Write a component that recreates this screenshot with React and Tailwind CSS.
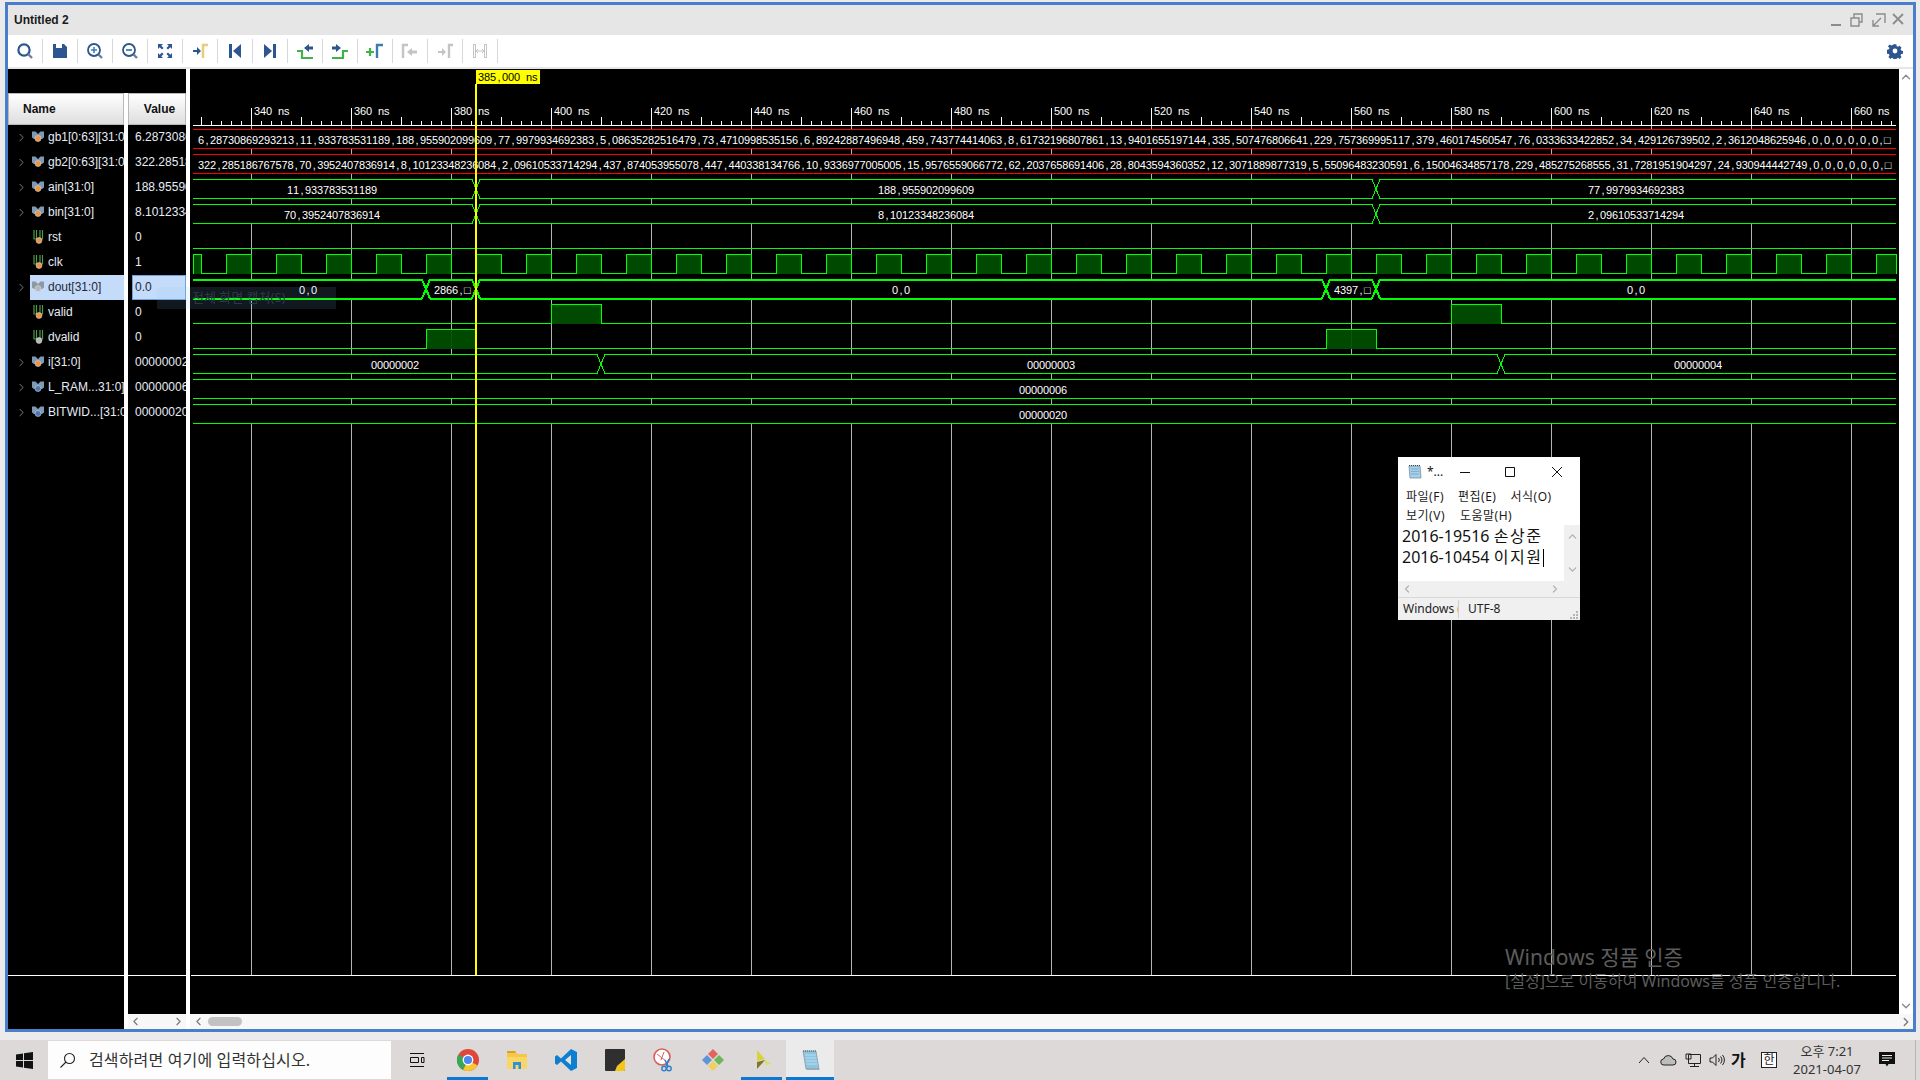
// Vivado waveform window with a notepad on top, Windows 10 taskbar below.
import { ChevronDown, ChevronLeft, ChevronRight, ChevronUp } from 'lucide-react'

const SANS = 'font-["Liberation_Sans",Arial,sans-serif]'
const KR = 'font-["Noto_Sans","Noto_Sans_CJK_KR",sans-serif]'
const GREEN = '#00ff00'
const NAVY = '#2d5690'

const GB1 = '6,28730869293213,11,933783531189,188,955902099609,77,9979934692383,5,08635282516479,73,4710998535156,6,89242887496948,459,743774414063,8,61732196807861,13,9401655197144,335,507476806641,229,757369995117,379,460174560547,76,0333633422852,34,429126739502,2,3612048625946,0,0,0,0,0,0,□'
const GB2 = '322,285186767578,70,3952407836914,8,10123348236084,2,09610533714294,437,874053955078,447,440338134766,10,9336977005005,15,9576559066772,62,2037658691406,28,8043594360352,12,3071889877319,5,55096483230591,6,15004634857178,229,485275268555,31,7281951904297,24,930944442749,0,0,0,0,0,0,□'

const SIGNALS = [
  { name: 'gb1[0:63][31:0]', value: '6.287308693', icon: 'bus' },
  { name: 'gb2[0:63][31:0]', value: '322.2851867', icon: 'bus' },
  { name: 'ain[31:0]', value: '188.9559020', icon: 'bus' },
  { name: 'bin[31:0]', value: '8.101233482', icon: 'bus' },
  { name: 'rst', value: '0', icon: 'bit' },
  { name: 'clk', value: '1', icon: 'bit' },
  { name: 'dout[31:0]', value: '0.0', icon: 'busGrey', selected: true },
  { name: 'valid', value: '0', icon: 'bit' },
  { name: 'dvalid', value: '0', icon: 'bitGrey' },
  { name: 'i[31:0]', value: '00000002', icon: 'bus' },
  { name: 'L_RAM...31:0]', value: '00000006', icon: 'busConst' },
  { name: 'BITWID...[31:0]', value: '00000020', icon: 'busConst' },
]

const rowTop = (k) => 129 + 25 * k
const rowBottom = (k) => 148 + 25 * k

// the wave font is drawn on a fixed cell, commas sit in the middle of theirs
function CellText({ x, y, children, fill = '#fff', cell = 6 }) {
  const xs = Array.from(children)
    .map((c, i) => x + i * cell + (c === ',' ? 1.5 : 0))
    .join(' ')
  return (
    <text x={xs} y={y} fill={fill} fontSize="11" fontFamily="Liberation Sans, Arial, sans-serif">
      {children}
    </text>
  )
}

function CenterText({ cx, y, children }) {
  return <CellText x={cx - (children.length * 6) / 2} y={y}>{children}</CellText>
}

function Bus({ k, cuts = [], color = GREEN, width = 1, labels = [] }) {
  const top = rowTop(k) + 0.5
  const bot = rowBottom(k) + 0.5
  const edges = [193, ...cuts, 1896]
  const parts = []
  for (let i = 0; i < edges.length - 1; i++) {
    const a = i === 0 ? edges[i] : edges[i] + 4
    const b = i === edges.length - 2 ? edges[i + 1] : edges[i + 1] - 4
    parts.push(`M${a} ${top}H${b}M${a} ${bot}H${b}`)
  }
  cuts.forEach((c) => parts.push(`M${c - 4} ${top}L${c + 4} ${bot}M${c - 4} ${bot}L${c + 4} ${top}`))
  return (
    <g>
      <rect x="191" y={rowTop(k)} width="1705" height={rowBottom(k) - rowTop(k) + 1} fill="#000" />
      <path d={parts.join('')} stroke={color} strokeWidth={width} fill="none" />
      {labels.map(([cx, t]) => (
        <CenterText key={t + cx} cx={cx} y={rowTop(k) + 15}>{t}</CenterText>
      ))}
    </g>
  )
}

function Bit({ k, highs = [] }) {
  const top = rowTop(k) + 0.5
  const bot = rowBottom(k) + 0.5
  let d = `M193 ${bot}`
  highs.forEach(([a, b]) => {
    d += `H${a}V${top}H${b}V${bot}`
  })
  d += 'H1896'
  return (
    <g>
      {highs.map(([a, b]) => (
        <rect key={a} x={a} y={top} width={b - a} height={bot - top} fill="#004f00" fillOpacity="0.93" />
      ))}
      <path d={d} stroke={GREEN} fill="none" />
    </g>
  )
}

function Waveform() {
  const majors = Array.from({ length: 17 }, (_, i) => 251 + i * 100)
  const clk = [[193, 201]]
  for (let x = 226; x < 1896; x += 50) clk.push([x, Math.min(x + 25, 1896)])
  const ticks = []
  for (let x = 201; x < 1896; x += 10) {
    const major = (x - 251) % 100 === 0
    const mid = (x - 251) % 50 === 0
    ticks.push(`M${x + 0.5} ${major ? 108 : mid ? 117 : 121}V125`)
  }
  return (
    <svg width="1709" height="945" viewBox="190 69 1709 945" shapeRendering="crispEdges" className="block shrink-0 bg-black">
      {majors.map((x) => (
        <rect key={x} x={x} y="125" width="1" height="850" fill="#b4b4b4" />
      ))}
      {/* ruler */}
      <path d={ticks.join('')} stroke="#fff" fill="none" />
      <rect x="193" y="125" width="1703" height="1" fill="#fff" />
      {majors.map((x, i) => (
        <CellText key={x} x={x + 3} y={115}>{`${340 + i * 20} ns`}</CellText>
      ))}

      {/* gb1 / gb2 are shown as long concatenated buses */}
      <Bus k={0} color="#ff0000" />
      <CellText x={198} y={144}>{GB1}</CellText>
      <Bus k={1} color="#ff0000" />
      <CellText x={198} y={169} cell={5.96}>{GB2}</CellText>

      <Bus k={2} cuts={[476, 1376]} labels={[[332, '11,933783531189'], [926, '188,955902099609'], [1636, '77,9979934692383']]} />
      <Bus k={3} cuts={[476, 1376]} labels={[[332, '70,3952407836914'], [926, '8,10123348236084'], [1636, '2,09610533714294']]} />
      <Bit k={4} />
      <Bit k={5} highs={clk} />
      <Bus k={6} cuts={[426, 476, 1326, 1376]} width={2} labels={[[308, '0,0'], [452, '2866,□'], [901, '0,0'], [1352, '4397,□'], [1636, '0,0']]} />
      <Bit k={7} highs={[[551, 601], [1451, 1501]]} />
      <Bit k={8} highs={[[426, 476], [1326, 1376]]} />
      <Bus k={9} cuts={[601, 1501]} labels={[[395, '00000002'], [1051, '00000003'], [1698, '00000004']]} />
      <Bus k={10} labels={[[1043, '00000006']]} />
      <Bus k={11} labels={[[1043, '00000020']]} />

      <rect x="191" y="975" width="1705" height="1" fill="#fff" />
      {/* cursor */}
      <rect x="475" y="84" width="2" height="891" fill="#ffff00" />
      <rect x="476" y="70" width="64" height="14" fill="#ffff00" />
      <CellText x={478} y={81} fill="#000">385,000 ns</CellText>
    </svg>
  )
}

function SignalIcon({ type }) {
  const dot = type === 'bus' || type === 'bit' ? '#ee9440' : type === 'busConst' ? '#4d78b0' : '#b8b8b8'
  if (type === 'bit' || type === 'bitGrey') {
    return (
      <svg width="14" height="14" viewBox="0 0 14 14" className="shrink-0">
        <path d="M3 0v9h2.500V0M9 0v9h2.500V0" fill="none" stroke="#4f9a48" strokeWidth="1.200" />
        <circle cx="8" cy="10.500" r="2.900" fill={dot} stroke="#d8d8d8" strokeWidth="0.600" />
      </svg>
    )
  }
  return (
    <svg width="14" height="14" viewBox="0 0 14 14" className="shrink-0">
      <path d="M1 1.500h3.500L7 4l2.500-2.500H13v6l-2 1.500H3L1 7.500z" fill={type === 'busGrey' ? '#8c98a4' : '#7f98b4'} />
      <circle cx="7" cy="8.500" r="3" fill={dot} stroke="#cfd6dd" strokeWidth="0.600" />
    </svg>
  )
}

function NameRow({ s }) {
  const hasChildren = s.icon.startsWith('bus')
  return (
    <div className="flex h-[25px] items-center">
      <div className="flex w-[22px] shrink-0 items-center pl-[7px]">
        {hasChildren && <ChevronRight size={13} strokeWidth={1.6} className="text-[#8f8f8f]" />}
      </div>
      <div className={`flex h-[25px] min-w-0 flex-1 items-center overflow-hidden pb-[2px] ${s.selected ? 'bg-[#c5dbfa] text-[#1f2a38]' : 'text-[#e6ecf4]'}`}>
        <div className="flex w-[17px] shrink-0 justify-start pl-px"><SignalIcon type={s.icon} /></div>
        <span className="whitespace-nowrap pl-px text-[12px]">{s.name}</span>
      </div>
    </div>
  )
}

function ValueRow({ s }) {
  return (
    <div className="flex h-[25px] items-center pl-[4px]">
      <div className={`flex h-[25px] min-w-0 flex-1 items-center overflow-hidden pb-[2px] text-[12px] whitespace-nowrap ${s.selected ? 'border border-[#6ea2dc] bg-[#c5dbfa] pl-[2px] text-[#1f2a38]' : 'pl-[3px] text-[#e6ecf4]'}`}>
        {s.value}
      </div>
    </div>
  )
}

function HeaderCell({ children, className = '' }) {
  return (
    <div className={`flex h-[32px] items-center border border-[#b9b9b9] bg-gradient-to-b from-white to-[#dedede] text-[12px] font-bold text-[#111] ${className}`}>
      {children}
    </div>
  )
}

const TOOLS = [
  <g fill="none"><circle cx="9" cy="9" r="5.6" stroke={NAVY} strokeWidth="2.2" /><path d="M13 13l4 4" stroke="#6d7f95" strokeWidth="2.4" /></g>,
  <path d="M3 3h3v4h6V3h2l3 3v11H3z" fill={NAVY} />,
  <g fill="none"><circle cx="9" cy="9" r="6" stroke={NAVY} strokeWidth="1.8" /><path d="M6 9h6M9 6v6" stroke="#3f7fb5" strokeWidth="1.6" /><path d="M13.5 13.5l3.5 3.5" stroke="#6d7f95" strokeWidth="2.4" /></g>,
  <g fill="none"><circle cx="9" cy="9" r="6" stroke={NAVY} strokeWidth="1.8" /><path d="M6 9h6" stroke="#3f7fb5" strokeWidth="1.8" /><path d="M13.5 13.5l3.5 3.5" stroke="#6d7f95" strokeWidth="2.4" /></g>,
  <path d="M3 3h5L6.3 4.7 8.6 7 7 8.6 4.7 6.3 3 8zM17 3v5l-1.7-1.7L13 8.6 11.4 7l2.3-2.3L12 3zM3 17v-5l1.7 1.7L7 11.4 8.6 13l-2.3 2.3L8 17zM17 17h-5l1.7-1.7L11.4 13l1.6-1.6 2.3 2.3L17 12z" fill={NAVY} />,
  <g><path d="M3 9h4V6l4 4-4 4v-3H3z" fill={NAVY} /><path d="M13 17V4h5" fill="none" stroke="#e6cd80" strokeWidth="2.6" /></g>,
  <g fill={NAVY}><rect x="4" y="3" width="3" height="14" /><path d="M16 3v14l-8-7z" /></g>,
  <g fill={NAVY}><rect x="13" y="3" width="3" height="14" /><path d="M4 3v14l8-7z" /></g>,
  <g><path d="M2 9h5v7h11" fill="none" stroke="#3fb34a" strokeWidth="2.2" transform="translate(0 1)" /><path d="M9 7l5-4v2.5h4v3h-4V11z" fill={NAVY} /></g>,
  <g><path d="M18 10h-5v7H2" fill="none" stroke="#3fb34a" strokeWidth="2.2" /><path d="M11 7L6 3v2.5H2v3h4V11z" fill={NAVY} /></g>,
  <g fill="none"><path d="M1 11h8M5 7v8" stroke="#3fb34a" strokeWidth="2.2" /><path d="M12 17V4h6" stroke="#3a7cae" strokeWidth="2.4" /></g>,
  <g><path d="M3 17V4h5" fill="none" stroke="#c4c4c4" strokeWidth="2.4" /><path d="M7 11l5-4v2.5h5v3h-5V15z" fill="#c4c4c4" /></g>,
  <g><path d="M3 10h4V7l4 4-4 4v-3H3z" fill="#c4c4c4" /><path d="M14 17V4h4" fill="none" stroke="#c4c4c4" strokeWidth="2.4" /></g>,
  <g fill="none" stroke="#c4c4c4"><rect x="3.5" y="3.5" width="2" height="13" strokeWidth="1" /><rect x="14.5" y="3.5" width="2" height="13" strokeWidth="1" /><path d="M6 10h8M8 8l-2 2 2 2M12 8l2 2-2 2" strokeWidth="1" /></g>,
]

function Toolbar() {
  return (
    <div className="flex h-[32px] items-center bg-white">
      <div className="flex flex-1 items-center">
        {TOOLS.map((t, i) => (
          <div key={i} className="flex h-[24px] w-[35px] items-center justify-between">
            <svg width="20" height="20" viewBox="0 0 20 20" className="ml-[7px]">{t}</svg>
            <div className="h-[24px] w-px bg-[#d8d8d8]" />
          </div>
        ))}
      </div>
      <svg width="16" height="16" viewBox="0 0 16 16" className="mr-[10px]">
        <path d="M6.6 1h2.8l.4 2 1.4.6 1.7-1.1 2 2-1.1 1.7.6 1.4 2 .4v2.800l-2 .4-.6 1.4 1.1 1.7-2 2-1.7-1.1-1.4.6-.4 2H6.600l-.4-2-1.4-.6-1.7 1.1-2-2 1.1-1.7-.6-1.4-2-.4V6.600l2-.4.6-1.4L.5 3.100l2-2 1.7 1.1 1.4-.6z" fill={NAVY} transform="translate(.4 .4) scale(.95)" />
        <circle cx="8" cy="8" r="2.4" fill="#fff" />
      </svg>
    </div>
  )
}

function WindowControls() {
  return (
    <svg width="82" height="16" viewBox="0 0 82 16" fill="none" stroke="#8c8c8c" strokeWidth="1.4">
      <path d="M0 13h10" strokeWidth="2" />
      <path d="M20 6h8v8h-8zM23 6V2h8v8h-3" />
      <path d="M45 2h9v9M42 14l8-8M42 8v6h6" />
      <path d="M62 2l10 10M72 2L62 12" strokeWidth="1.8" />
    </svg>
  )
}

function Notepad() {
  return (
    <div className={`absolute left-[1398px] top-[457px] flex h-[163px] w-[182px] flex-col bg-white ${KR}`}>
      <div className="flex h-[29px] items-center text-[#111]">
        <svg width="16" height="16" viewBox="0 0 16 16" className="ml-[9px]">
          <path d="M2 2h11l1 12H3z" fill="#a8cfe8" stroke="#6f8fa8" strokeWidth="0.8" />
          <path d="M4 5h8M4 7.5h8M4 10h8" stroke="#6f9fc0" strokeWidth="0.7" />
          <path d="M2 1.5h11" stroke="#444" strokeDasharray="1 1" />
        </svg>
        <span className="ml-[4px] text-[12px]">*...</span>
        <svg width="108" height="14" viewBox="0 0 108 14" fill="none" stroke="#111" className="ml-auto mr-[12px]">
          <path d="M0 7.5h10M45.5 2.5h9v9h-9zM92 2l10 10M102 2L92 12" />
        </svg>
      </div>
      <div className="mt-[2px] flex h-[18px] items-center gap-[14px] pl-[8px] text-[12px] tracking-[0.5px] text-[#1a1a1a]">
        <span>파일(F)</span><span>편집(E)</span><span>서식(O)</span>
      </div>
      <div className="flex h-[19px] items-center gap-[15px] pl-[8px] text-[12px] tracking-[0.5px] text-[#1a1a1a]">
        <span>보기(V)</span><span>도움말(H)</span>
      </div>
      <div className="flex h-[56px]">
        <div className="min-w-0 flex-1 pl-[4px] pt-[1px] text-[16px] leading-[21px] text-[#111] whitespace-nowrap">
          <div>2016-19516 <span className="tracking-[1.6px]">손상준</span></div>
          <div className="flex items-center whitespace-pre">2016-10454 <span className="tracking-[1.6px]">이지원</span><span className="h-[18px] w-px bg-black" /></div>
        </div>
        <div className="flex w-[16px] flex-col items-center justify-between bg-[#f0f0f0] py-[5px] text-[#b0b0b0]">
          <ChevronUp size={13} strokeWidth={2.4} />
          <ChevronDown size={13} strokeWidth={2.4} />
        </div>
      </div>
      <div className="flex h-[16px] items-center justify-between bg-[#f0f0f0] px-[3px] text-[#b0b0b0]">
        <ChevronLeft size={12} strokeWidth={2.4} />
        <ChevronRight size={12} strokeWidth={2.4} className="mr-[16px]" />
      </div>
      <div className="flex flex-1 items-center border-t border-[#d8d8d8] bg-[#f0f0f0] text-[12px] text-[#222]">
        <span className="w-[61px] overflow-hidden whitespace-nowrap border-r border-[#d0d0d0] pl-[5px]">Windows (</span>
        <span className="pl-[9px]">UTF-8</span>
        <svg width="10" height="10" viewBox="0 0 10 10" className="ml-auto mr-[1px] self-end fill-[#b5b5b5]">
          <path d="M7 1h2v2H7zM4 4h2v2H4zM7 4h2v2H7zM1 7h2v2H1zM4 7h2v2H4zM7 7h2v2H7z" />
        </svg>
      </div>
    </div>
  )
}

const TASK_ICONS = [
  { key: 'chrome', on: true, svg: (
    <g>
      <circle cx="12" cy="12" r="11" fill="#e0463a" />
      <path d="M12 12L21.6 17.5A11 11 0 0 1 7 21.8z" fill="#f7c92f" />
      <path d="M12 12L7 21.8A11 11 0 0 1 2.4 6.5z" fill="#3aa757" />
      <circle cx="12" cy="12" r="5.4" fill="#fff" /><circle cx="12" cy="12" r="4.1" fill="#4a8af0" />
    </g>
  ) },
  { key: 'folder', svg: (
    <g>
      <path d="M2 3h8l2 3h10v15H2z" fill="#f5c748" /><path d="M2 3h8l1 2H2z" fill="#d9a227" />
      <rect x="2" y="9" width="20" height="12" fill="#fad667" />
      <path d="M8 21v-7h8v7h-2.5v-4h-3v4z" fill="#2f8fd8" />
    </g>
  ) },
  { key: 'vscode', svg: (
    <g>
      <path d="M17 1l6 3v16l-6 3-10-9.5L3 17l-2-1.5V8.500L3 7l4 3.500z" fill="#0e7fd0" />
      <path d="M17 7l-6 5 6 5z" fill="#e4e0de" />
    </g>
  ) },
  { key: 'sticky', svg: (
    <g><rect x="2" y="1" width="20" height="22" rx="1" fill="#2f2f2f" /><path d="M22 11v11a1 1 0 0 1-1 1h-9l2-5z" fill="#f5c518" /></g>
  ) },
  { key: 'snip', svg: (
    <g fill="none">
      <circle cx="10" cy="9" r="8" fill="#fff" stroke="#d8605a" strokeWidth="1.6" />
      <path d="M5 6l9 7M12 4l-3 8" stroke="#d8605a" />
      <path d="M13 12l3 6M17 11l-3 7" stroke="#2f7fc8" strokeWidth="1.6" />
      <circle cx="17" cy="20.500" r="2.2" stroke="#2f7fc8" strokeWidth="1.4" /><circle cx="12" cy="20.500" r="2.2" stroke="#2f7fc8" strokeWidth="1.4" />
    </g>
  ) },
  { key: 'kit', svg: (
    <g>
      <path d="M12 1l5 5-5 5-5-5z" fill="#e2655d" /><path d="M18 7l5 5-5 5-5-5z" fill="#6db65a" />
      <path d="M6 7l5 5-5 5-5-5z" fill="#5f93d8" /><path d="M12 13l5 5-5 5-5-5z" fill="#f0cf5a" />
    </g>
  ) },
  { key: 'vivado', on: true, svg: (
    <g>
      <path d="M7 2l8 9-8 2z" fill="#d8d23e" /><path d="M7 14l8-2-8 9z" fill="#7d7a22" />
      <path d="M15 12l7 4-7 1z" fill="#d9e06a" />
    </g>
  ) },
  { key: 'notepad', active: true, svg: (
    <g>
      <path d="M5 3h13l3 18H8z" fill="#8fc4e0" stroke="#6c8fa8" strokeWidth="0.6" />
      <path d="M7 7h11M7.500 10h11M8 13h11M8.500 16h11" stroke="#b8deef" />
      <path d="M8 21h13l1 1H9z" fill="#a8a8a8" />
      <path d="M5 3h13" stroke="#555" strokeDasharray="1 1" />
    </g>
  ) },
]

function taskCell(t) {
  if (t.active) return 'w-[48px] border-[#0a78d4] bg-[#ecebeb]'
  if (t.on) return 'mx-[4px] w-[41px] border-[#0a78d4]'
  return 'w-[49px] border-transparent'
}

function Taskbar() {
  return (
    <div className={`flex h-[40px] items-stretch bg-[#dcd9d8] ${KR}`}>
      <div className="flex w-[48px] items-center justify-center">
        <svg width="17" height="17" viewBox="0 0 17 17" fill="#111">
          <path d="M0 2.400L7 1.400V8H0zM8 1.300L17 0v8H8zM0 9h7v6.600L0 14.600zM8 9h9v8l-9-1.300z" />
        </svg>
      </div>
      <div className="my-[1px] flex w-[343px] items-center bg-[#fdfdfd] pl-[12px] text-[16px] text-[#333]">
        <svg width="16" height="16" viewBox="0 0 16 16" fill="none" stroke="#222" strokeWidth="1.100" className="-scale-x-100">
          <circle cx="6.500" cy="6.500" r="5" /><path d="M10 10l5.500 5.500" />
        </svg>
        <span className="ml-[13px] whitespace-nowrap tracking-[0.15px]">검색하려면 여기에 입력하십시오.</span>
      </div>
      <div className="flex w-[52px] items-center justify-center">
        <svg width="16" height="16" viewBox="0 0 16 16" fill="none" stroke="#111">
          <path d="M1 1.500h14M1 14.500h14M1.500 5.500h8v5h-8zM12.500 5.500h2.500v5h-2.500z" />
        </svg>
      </div>
      {TASK_ICONS.map((t) => (
        <div key={t.key} className={`flex items-center justify-center border-b-[3px] pt-[3px] ${taskCell(t)}`}>
          <svg width="24" height="24" viewBox="0 0 24 24">{t.svg}</svg>
        </div>
      ))}
      <div className="ml-auto flex items-center text-[#222]">
        <svg width="12" height="8" viewBox="0 0 12 8" fill="none" stroke="#222" className="mr-[10px]"><path d="M1 7l5-5.500L11 7" /></svg>
        <svg width="17" height="12" viewBox="0 0 17 12" fill="#bdbdbd" stroke="#222" className="mr-[8px]">
          <path d="M4 11a3 3 0 0 1-.5-6A5 5 0 0 1 13 5a3 3 0 0 1 0 6z" />
        </svg>
        <svg width="16" height="15" viewBox="0 0 16 15" fill="none" stroke="#222" className="mr-[8px]">
          <path d="M3.500 1.500h12v9h-12zM1 1h5v5H1zM9.500 10.500v3M5 13.500h9" />
        </svg>
        <svg width="16" height="14" viewBox="0 0 16 14" fill="none" stroke="#222" className="mr-[6px]">
          <path d="M1 5h2.500L7 1.500v11L3.500 9H1zM9.500 5a3 3 0 0 1 0 4M11.500 3.500a5 5 0 0 1 0 7M13.500 2a7.500 7.500 0 0 1 0 10" />
        </svg>
        <span className="w-[20px] text-[16px] font-bold leading-none text-[#111]">가</span>
        <span className="ml-[10px] flex h-[16px] w-[16px] items-center justify-center border border-[#222] bg-white text-[12px] leading-none">한</span>
        <div className="ml-[3px] flex w-[94px] flex-col items-center text-[13px] leading-[18px] text-[#333]">
          <span>오후 7:21</span>
          <span>2021-04-07</span>
        </div>
        <svg width="16" height="16" viewBox="0 0 16 16" className="ml-[5px] mr-[20px]">
          <path d="M0 0h16v12H9.500L8 14.500 6.500 12H0z" fill="#111" />
          <path d="M3 3.500h10M3 6h10M3 8.500h7" stroke="#eee" />
        </svg>
        <div className="h-full w-px bg-[#b5b5b5]" />
        <div className="w-[4px]" />
      </div>
    </div>
  )
}

export default function App() {
  return (
    <div className={`relative flex h-[1080px] w-[1920px] flex-col overflow-hidden bg-[#ebebeb] ${SANS}`}>
      <div className="h-[1040px] pb-[8px] pl-[5px] pr-[4px] pt-[2px]">
        <div className="flex h-full flex-col border-[3px] border-[#4a7ecb] bg-white">
          <div className="flex h-[30px] items-center justify-between bg-[#e6e6e6] pl-[6px]">
            <span className="text-[12px] font-bold text-[#1a1a1a]">Untitled 2</span>
            <WindowControls />
          </div>
          <Toolbar />
          <div className="h-[2px] bg-[#e6e6e6]" />
          <div className="flex min-h-0 flex-1">
            {/* names and values */}
            <div className="flex w-[178px] flex-col">
              <div className="h-[24px] bg-black" />
              <div className="flex min-h-0 flex-1 gap-[4px]">
                <div className="flex w-[116px] flex-col bg-black">
                  <HeaderCell className="pl-[14px]">Name</HeaderCell>
                  <div className="h-[850px] overflow-hidden">
                    {SIGNALS.map((s) => <NameRow key={s.name} s={s} />)}
                  </div>
                  <div className="h-px bg-white" />
                </div>
                <div className="flex w-[58px] flex-col">
                  <HeaderCell className="justify-center pl-[5px]">Value</HeaderCell>
                  <div className="h-[850px] overflow-hidden bg-black">
                    {SIGNALS.map((s) => <ValueRow key={s.name} s={s} />)}
                  </div>
                  <div className="h-px bg-white" />
                  <div className="h-[38px] bg-black" />
                  <div className="flex h-[15px] items-center justify-between bg-[#f7f7f7] px-[1px] text-[#777]">
                    <ChevronLeft size={13} strokeWidth={2} />
                    <ChevronRight size={13} strokeWidth={2} />
                  </div>
                </div>
              </div>
            </div>
            <div className="w-[4px]" />
            {/* wave pane with its scrollbars */}
            <div className="flex min-w-0 flex-1 flex-col">
              <div className="flex">
                <Waveform />
                <div className="flex w-[14px] flex-col items-center justify-between py-[1px] text-[#888]">
                  <ChevronUp size={14} strokeWidth={2.2} />
                  <ChevronDown size={14} strokeWidth={2.2} />
                </div>
              </div>
              <div className="flex h-[15px] items-center bg-[#f7f7f7] pl-[2px] text-[#777]">
                <ChevronLeft size={13} strokeWidth={2} />
                <div className="ml-[3px] h-[9px] w-[34px] rounded-full bg-[#c2c2c2]" />
                <ChevronRight size={14} strokeWidth={2.2} className="ml-auto" />
              </div>
            </div>
          </div>
        </div>
      </div>
      <Taskbar />

      {/* leftover fade of the capture tooltip */}
      <div className={`absolute left-[157px] top-[287px] flex h-[22px] w-[179px] items-center bg-[#8cc8ff]/12 pl-[35px] text-[13px] text-[#2d3a45] ${KR}`}>
        전체 화면 캡처(S)
      </div>
      <div className={`absolute left-[1505px] top-[943px] text-[#5c5c5c] ${KR}`}>
        <div className="text-[21px] leading-[28px]">Windows 정품 인증</div>
        <div className="text-[16px] leading-[20px]">[설정]으로 이동하여 Windows를 정품 인증합니다.</div>
      </div>
      <Notepad />
    </div>
  )
}
